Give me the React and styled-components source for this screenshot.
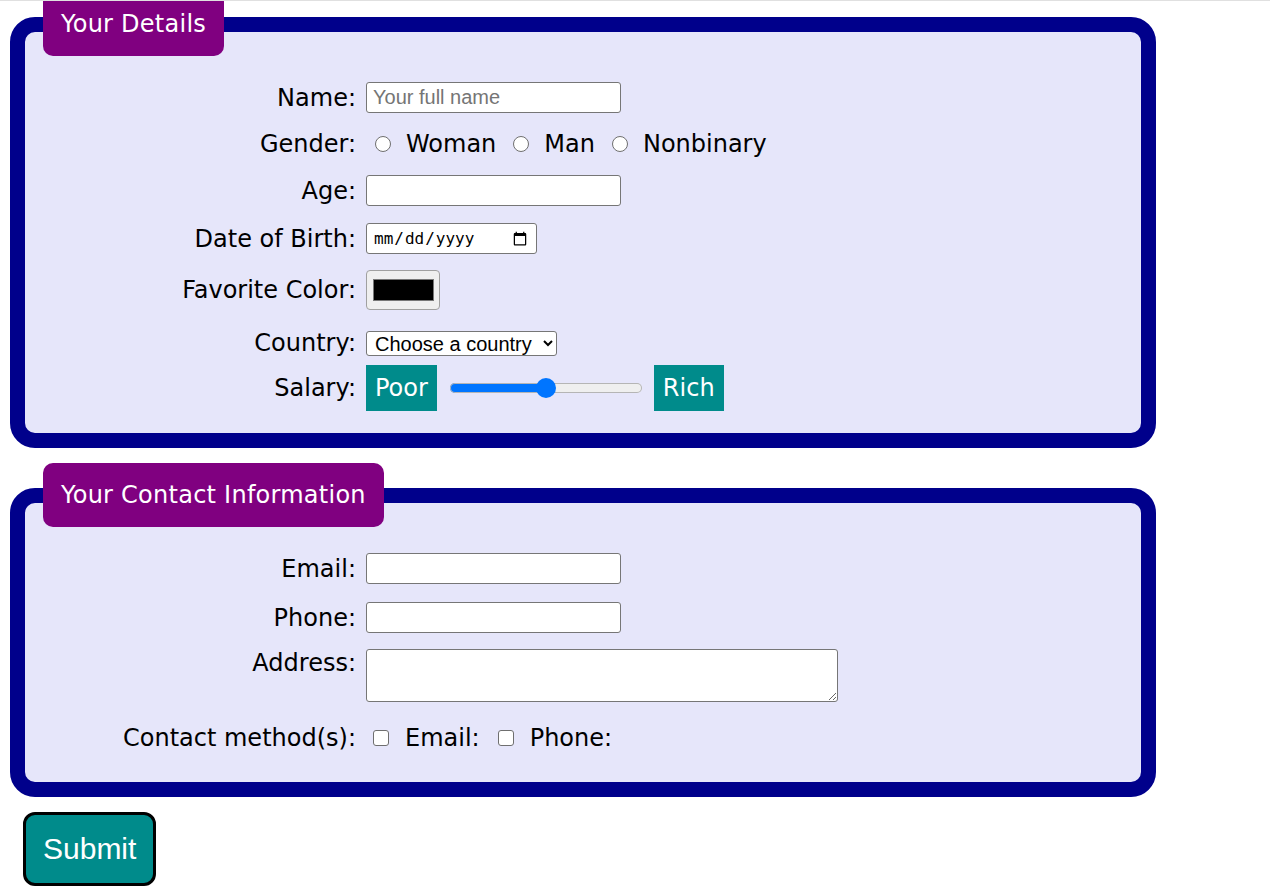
import React, { useState } from 'react';
import styled, { createGlobalStyle } from 'styled-components';

const GlobalStyle = createGlobalStyle`
    html {
        overflow: hidden;
    }
    body {
        margin: 0 8px 8px;
        background: #fff;
        color: #000;
        font-family: "DejaVu Sans", Verdana, sans-serif;
    }
`;

// thin grey edge of the browser toolbar, lying over the page
const TopEdge = styled.div`
    position: fixed;
    top: 0;
    left: 0;
    right: 0;
    height: 1px;
    background: #e0e0e0;
`;

const Form = styled.form`
    margin-top: -8px;
`;

const Fieldset = styled.fieldset`
    box-sizing: border-box;
    width: 1146px;
    min-width: 0;
    margin: 0 2px 15px;
    padding: 26px 18px ${props => props.$bottom}px;
    border: 15px solid #00008b;
    border-radius: 25px;
    background: #e6e6fa;
    font-size: 24px;
`;

const Legend = styled.legend`
    padding: 18px;
    border-radius: 10px;
    background: #800080;
    color: #fff;
    line-height: 28px;
    letter-spacing: 0.25px;
`;

const Row = styled.div`
    display: grid;
    grid-template-columns: 313px 1fr;
    column-gap: 10px;
    align-items: ${props => (props.$top ? 'start' : 'center')};
    margin-top: ${props => props.$space || 0}px;
`;

const Label = styled.label`
    text-align: right;
    line-height: 28px;
    white-space: nowrap;
`;

const field = `
    box-sizing: border-box;
    justify-self: start;
    border: 1px solid #767676;
    border-radius: 3px;
    background: #fff;
    font-family: "Liberation Sans", Arial, sans-serif;
    font-size: 20px;
    color: #000;
`;

const TextInput = styled.input`
    ${field}
    width: ${props => props.$w || 255}px;
    height: 31px;
    padding: 1px 6px;

    &::placeholder {
        color: #757575;
    }
`;

const DateInput = styled.input`
    ${field}
    width: 171px;
    height: 31px;
    padding: 1px 6px;
    font-family: "DejaVu Sans Mono", monospace;
    font-size: 16px;
`;

const ColorInput = styled.input`
    box-sizing: border-box;
    justify-self: start;
    width: 74px;
    height: 40px;
    padding: 4px 3.5px;
    border: 1px solid #a0a0a0;
    border-radius: 4px;
    background: #efefef;

    &::-webkit-color-swatch-wrapper {
        padding: 4px 2px;
    }
    &::-webkit-color-swatch {
        border: 1px solid #777;
    }
`;

const Select = styled.select`
    ${field}
    width: 191px;
    height: 25px;
    padding: 0 2px 0 4px;
`;

const TextArea = styled.textarea`
    ${field}
    width: 472px;
    height: 53px;
    padding: 2px 6px;
`;

const Group = styled.div`
    display: flex;
    align-items: center;
    gap: ${props => props.$gap ?? 17}px;
    padding-left: ${props => props.$indent ?? 0}px;
`;

const Choice = styled.label`
    display: inline-flex;
    align-items: center;
    gap: ${props => props.$gap ?? 16}px;
    line-height: 28px;
`;

const Tick = styled.input`
    appearance: none;
    box-sizing: border-box;
    width: 16px;
    height: 16px;
    margin: 0;
    border: 1px solid #6f6f6f;
    border-radius: ${props => (props.type === 'radio' ? '50%' : '3px')};
    background: #fff;

    &:checked {
        border: 5px solid #0075ff;
    }
`;

const Tag = styled.span`
    padding: 9px;
    background: #008b8b;
    color: #fff;
    line-height: 28px;
`;

const Range = styled.input`
    appearance: none;
    width: 192px;
    height: 20px;
    margin: 0 12px 0 13px;
    background: transparent;

    &::-webkit-slider-runnable-track {
        height: 10px;
        border-radius: 5px;
        background: linear-gradient(to right, #0075ff var(--fill), #efefef var(--fill));
        box-shadow: inset 0 0 0 1px #b5b5b5;
    }
    &::-webkit-slider-thumb {
        appearance: none;
        width: 20px;
        height: 20px;
        margin-top: -5px;
        border: none;
        border-radius: 50%;
        background: #0075ff;
    }
`;

const SubmitButton = styled.button`
    display: block;
    margin: 0 0 0 15px;
    padding: 17px;
    border: 3px solid #000;
    border-radius: 12px;
    background: #008b8b;
    color: #fff;
    font-family: "Liberation Sans", Arial, sans-serif;
    font-size: 30px;
`;

export default function App() {
    const [salary, setSalary] = useState(50);

    return (
        <>
            <GlobalStyle />
            <Form onSubmit={e => e.preventDefault()}>
                <Fieldset $bottom={22}>
                    <Legend>Your Details</Legend>
                    <Row>
                        <Label htmlFor="name">Name:</Label>
                        <TextInput id="name" type="text" placeholder="Your full name" />
                    </Row>
                    <Row $space={17}>
                        <Label>Gender:</Label>
                        <Group $indent={9}>
                            <Choice $gap={15}><Tick type="radio" name="gender" /> Woman</Choice>
                            <Choice $gap={15}><Tick type="radio" name="gender" /> Man</Choice>
                            <Choice $gap={15}><Tick type="radio" name="gender" /> Nonbinary</Choice>
                        </Group>
                    </Row>
                    <Row $space={17}>
                        <Label htmlFor="age">Age:</Label>
                        <TextInput id="age" type="text" />
                    </Row>
                    <Row $space={17}>
                        <Label htmlFor="dob">Date of Birth:</Label>
                        <DateInput id="dob" type="date" />
                    </Row>
                    <Row $space={16}>
                        <Label htmlFor="color">Favorite Color:</Label>
                        <ColorInput id="color" type="color" defaultValue="#000000" />
                    </Row>
                    <Row $space={19}>
                        <Label htmlFor="country">Country:</Label>
                        <Select id="country" defaultValue="">
                            <option value="">Choose a country</option>
                            <option value="us">United States</option>
                            <option value="ca">Canada</option>
                            <option value="mx">Mexico</option>
                        </Select>
                    </Row>
                    <Row $space={8}>
                        <Label htmlFor="salary">Salary:</Label>
                        <Group $gap={0}>
                            <Tag>Poor</Tag>
                            <Range
                                id="salary"
                                type="range"
                                min="0"
                                max="100"
                                value={salary}
                                onChange={e => setSalary(e.target.value)}
                                style={{ '--fill': `${salary}%` }}
                            />
                            <Tag>Rich</Tag>
                        </Group>
                    </Row>
                </Fieldset>

                <Fieldset $bottom={30}>
                    <Legend>Your Contact Information</Legend>
                    <Row>
                        <Label htmlFor="email">Email:</Label>
                        <TextInput id="email" type="email" />
                    </Row>
                    <Row $space={18}>
                        <Label htmlFor="phone">Phone:</Label>
                        <TextInput id="phone" type="tel" />
                    </Row>
                    <Row $space={16} $top>
                        <Label htmlFor="address">Address:</Label>
                        <TextArea id="address" />
                    </Row>
                    <Row $space={22}>
                        <Label>Contact method(s):</Label>
                        <Group $indent={7} $gap={18}>
                            <Choice><Tick type="checkbox" /> Email:</Choice>
                            <Choice><Tick type="checkbox" /> Phone:</Choice>
                        </Group>
                    </Row>
                </Fieldset>

                <SubmitButton type="submit">Submit</SubmitButton>
            </Form>
            <TopEdge />
        </>
    );
}
